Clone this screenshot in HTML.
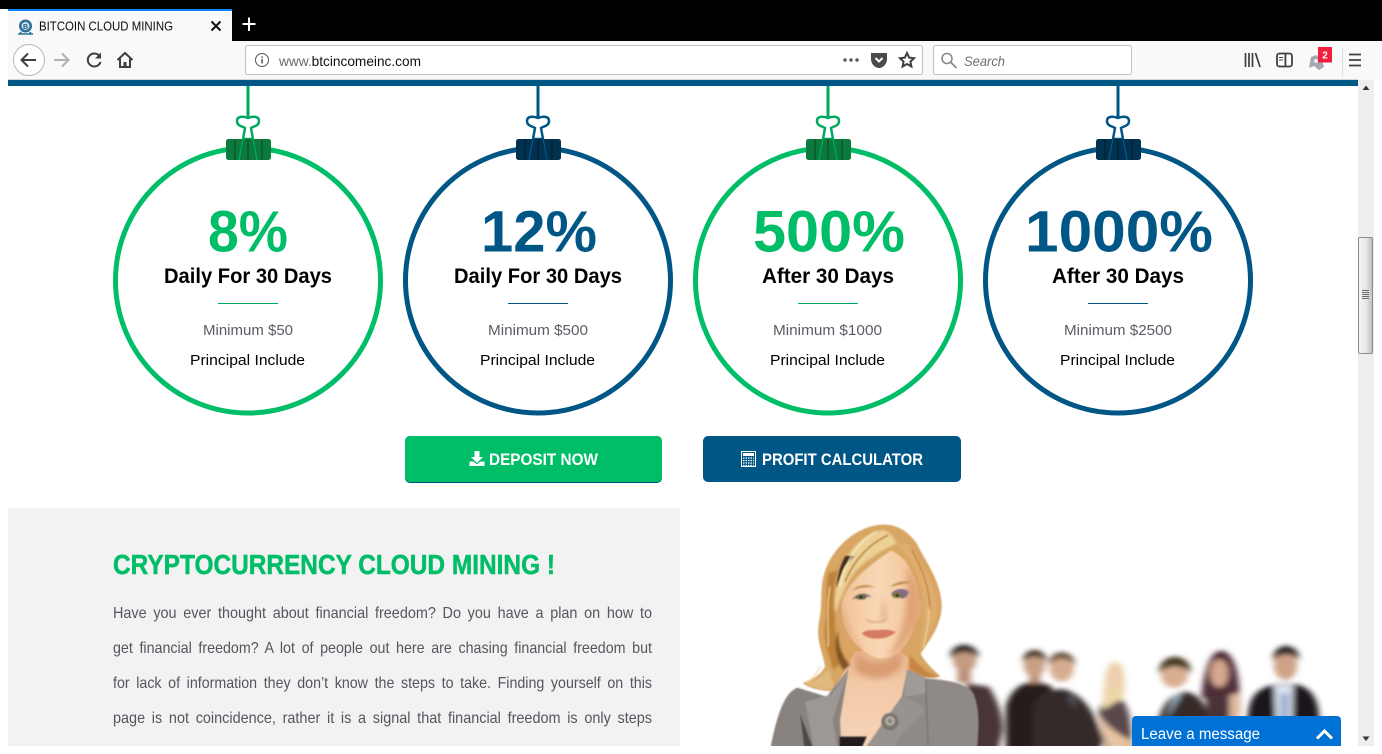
<!DOCTYPE html>
<html lang="en"><head><meta charset="utf-8"><title>BITCOIN CLOUD MINING</title>
<style>
html,body{margin:0;padding:0;background:#fff;overflow:hidden;width:1382px;height:754px}
svg{display:block;font-family:"Liberation Sans",sans-serif}
</style></head><body>
<svg width="1382" height="754" viewBox="0 0 1382 754" xmlns="http://www.w3.org/2000/svg">
<defs>
<filter id="s1" x="-20%" y="-20%" width="140%" height="140%"><feGaussianBlur stdDeviation="2"/></filter>
<filter id="s2" x="-20%" y="-20%" width="140%" height="140%"><feGaussianBlur stdDeviation="4"/></filter>
<filter id="s3" x="-30%" y="-30%" width="160%" height="160%"><feGaussianBlur stdDeviation="9"/></filter>
<filter id="p" x="-10%" y="-10%" width="120%" height="120%"><feGaussianBlur stdDeviation="7"/></filter>
<filter id="c" x="-10%" y="-10%" width="120%" height="120%"><feGaussianBlur stdDeviation=".35"/></filter>
<linearGradient id="thumb" x1="0" x2="1" y1="0" y2="0"><stop offset="0" stop-color="#f6f6f6"/><stop offset=".55" stop-color="#e6e6e6"/><stop offset="1" stop-color="#bdbdbd"/></linearGradient>
<linearGradient id="face" x1="0" x2="1" y1="0" y2="0"><stop offset="0" stop-color="#f1c298"/><stop offset=".45" stop-color="#f9d8b6"/><stop offset=".8" stop-color="#f4c9a0"/><stop offset="1" stop-color="#e0a678"/></linearGradient>
<linearGradient id="chest" x1="0" x2="0" y1="0" y2="1"><stop offset="0" stop-color="#e6b088"/><stop offset=".35" stop-color="#f3caa8"/><stop offset="1" stop-color="#f6d3b8"/></linearGradient>
<clipPath id="bot"><rect x="680" y="500" width="678" height="246"/></clipPath>
<g id="clip">
<path d="M0,0V31" stroke-width="3" fill="none"/>
<path d="M-5,53L-3,42C-6,40 -11,40 -11,35C-11,30 -5,30 0,32C5,30 11,30 11,35C11,40 6,40 3,42L5,53Z" fill="#fff" stroke-width="2.500"/>
<rect x="-22" y="53" width="45" height="21" rx="2.500" stroke="none"/>
<path d="M-13,53V74M14,53V74M0,53V74" stroke="#000" stroke-opacity=".22" stroke-width="2" fill="none"/>
<path d="M-5,52L-9,74M5,52L9,74" stroke-width="1.300" fill="none"/>
</g>
</defs>

<!-- window chrome -->
<rect width="1382" height="41" fill="#000"/>
<rect y="9" width="8" height="71" fill="#fff"/>
<rect x="8" y="41" width="1374" height="39" fill="#f9f9fa"/>
<rect x="8" y="79" width="1350" height="1" fill="#d6d6d6"/>
<rect x="8" y="9" width="224" height="32" fill="#f9f9fa"/>
<rect x="8" y="9" width="224" height="2" fill="#0a84ff"/>
<!-- favicon -->
<circle cx="25.500" cy="26" r="6.500" fill="#2a6f99"/><circle cx="25.500" cy="26" r="4" fill="#cfe0ec"/>
<text x="25.500" y="29" font-size="7" font-weight="700" fill="#1d5a80" text-anchor="middle">B</text>
<path d="M18,34H33M20,32L22,34M31,32L29,34" stroke="#2a6f99" stroke-width="1.500" fill="none"/>
<text x="39" y="30.500" font-size="12.500" fill="#0c0c0d" textLength="134" lengthAdjust="spacingAndGlyphs">BITCOIN CLOUD MINING</text>
<path d="M211.500,21.500L220.500,30.500M220.500,21.500L211.500,30.500" stroke="#111" stroke-width="2" fill="none"/>
<path d="M249,17.500V31M242.500,24H255.500" stroke="#fff" stroke-width="2" fill="none"/>

<!-- nav -->
<circle cx="29" cy="60" r="15.500" fill="#fff" stroke="#b8b8b8"/>
<path d="M36,60H22M28,53.500L21.500,60L28,66.500" stroke="#3f3f40" stroke-width="2" fill="none"/>
<path d="M54,60H68M62,53.500L68.500,60L62,66.500" stroke="#b1b1b3" stroke-width="2" fill="none"/>
<path d="M99.500,56A6.500,6.500 0 1 0 100.500,62" stroke="#3f3f40" stroke-width="2" fill="none"/>
<path d="M101,52.500V58.500H95Z" fill="#3f3f40"/>
<path d="M117.500,60L125,53L132.500,60M120,58.500V67H130V58.500" stroke="#3f3f40" stroke-width="2" fill="none"/><rect x="123.500" y="62" width="3" height="5" fill="#3f3f40"/>

<!-- url bar -->
<rect x="245.500" y="45.500" width="677" height="29" rx="2" fill="#fff" stroke="#c2c2c2"/>
<circle cx="262" cy="60" r="6.500" fill="none" stroke="#555" stroke-width="1"/>
<rect x="261.300" y="59" width="1.500" height="4.500" fill="#555"/><rect x="261.300" y="56.300" width="1.500" height="1.500" fill="#555"/>
<text x="279" y="66" font-size="14" fill="#111" textLength="142" lengthAdjust="spacingAndGlyphs"><tspan fill="#6b6b6b">www.</tspan>btcincomeinc.com</text>
<circle cx="845" cy="60" r="1.700" fill="#555"/><circle cx="851" cy="60" r="1.700" fill="#555"/><circle cx="857" cy="60" r="1.700" fill="#555"/>
<path d="M871,53H887V59C887,64 883,68 879,68C875,68 871,64 871,59Z" fill="#4a4a4f"/>
<path d="M875.500,58L879,61.500L882.500,58" stroke="#fff" stroke-width="2" fill="none"/>
<path d="M907,53L909.100,57.600L914,58.200L910.400,61.600L911.400,66.500L907,64L902.600,66.500L903.600,61.600L900,58.200L904.900,57.600Z" fill="none" stroke="#3f3f40" stroke-width="2"/>

<!-- search -->
<rect x="933.500" y="45.500" width="198" height="29" rx="2" fill="#fff" stroke="#c2c2c2"/>
<circle cx="947" cy="58.500" r="5" fill="none" stroke="#8a8a8a" stroke-width="1.600"/>
<path d="M951,62.500L956.500,68" stroke="#8a8a8a" stroke-width="1.800"/>
<text x="964" y="66" font-size="13.500" font-style="italic" fill="#6f6f6f" textLength="41" lengthAdjust="spacingAndGlyphs">Search</text>

<!-- right icons -->
<path d="M1245.500,53V67M1249,53V67M1252.500,53V67M1255.500,53L1260,67" stroke="#3f3f40" stroke-width="1.700" fill="none"/>
<rect x="1277" y="53.500" width="15" height="13" rx="2.500" fill="#fff" stroke="#3f3f40" stroke-width="1.800"/>
<rect x="1284.500" y="54" width="1.800" height="12" fill="#3f3f40"/><path d="M1279,57.500H1283M1279,60H1283" stroke="#3f3f40" stroke-width="1"/>
<path d="M1309,68L1311,57L1316,55L1322,60L1324,67L1319,70L1314,66Z" fill="#a6a8b0"/><circle cx="1316" cy="61" r="2" fill="#f0f0f0"/>
<rect x="1318" y="47" width="14" height="15.500" fill="#f01f3e"/>
<text x="1325" y="58.500" font-size="10" font-weight="700" fill="#fff" text-anchor="middle">2</text>
<rect x="1342" y="48" width="1" height="28" fill="#dcdcdc"/>
<path d="M1349,54.500H1361M1349,60H1361M1349,65.500H1361" stroke="#3f3f40" stroke-width="1.800"/>

<!-- blue bar -->
<rect x="8" y="80" width="1350" height="6" fill="#005685"/>

<!-- scrollbar -->
<rect x="1358" y="80" width="16" height="666" fill="#eeeeee"/>
<path d="M1362.500,90L1366,85.500L1369.500,90Z" fill="#333"/>
<path d="M1362.500,736.500L1366,741L1369.500,736.500Z" fill="#333"/>
<rect x="1358.500" y="237.500" width="14" height="116" rx="1.500" fill="url(#thumb)" stroke="#8c8c8c"/>
<rect x="1362" y="290" width="7" height="1" fill="#6a6a6a"/><rect x="1362" y="292" width="7" height="1" fill="#6a6a6a"/><rect x="1362" y="294" width="7" height="1" fill="#6a6a6a"/><rect x="1362" y="296" width="7" height="1" fill="#6a6a6a"/><rect x="1362" y="298" width="7" height="1" fill="#6a6a6a"/>

<!-- circles -->
<g fill="none" stroke-width="5">
<circle cx="248" cy="280.500" r="132.500" stroke="#00bd68"/>
<circle cx="538" cy="280.500" r="132.500" stroke="#005685"/>
<circle cx="828" cy="280.500" r="132.500" stroke="#00bd68"/>
<circle cx="1118" cy="280.500" r="132.500" stroke="#005685"/>
</g>
<g filter="url(#c)">
<use href="#clip" x="248" y="86" stroke="#00a860" fill="#0a7a3c"/>
<use href="#clip" x="538" y="86" stroke="#005685" fill="#04304f"/>
<use href="#clip" x="828" y="86" stroke="#00a860" fill="#0a7a3c"/>
<use href="#clip" x="1118" y="86" stroke="#005685" fill="#04304f"/>
</g>

<!-- circle text -->
<g font-weight="700" font-size="58">
<text x="208" y="251.500" fill="#00bd68" textLength="80" lengthAdjust="spacingAndGlyphs">8%</text>
<text x="481" y="251.500" fill="#005685" textLength="116" lengthAdjust="spacingAndGlyphs">12%</text>
<text x="753" y="251.500" fill="#00bd68" textLength="152" lengthAdjust="spacingAndGlyphs">500%</text>
<text x="1025" y="251.500" fill="#005685" textLength="188" lengthAdjust="spacingAndGlyphs">1000%</text>
</g>
<g font-weight="700" font-size="21" fill="#000">
<text x="164" y="283" textLength="168" lengthAdjust="spacingAndGlyphs">Daily For 30 Days</text>
<text x="454" y="283" textLength="168" lengthAdjust="spacingAndGlyphs">Daily For 30 Days</text>
<text x="762" y="283" textLength="132" lengthAdjust="spacingAndGlyphs">After 30 Days</text>
<text x="1052" y="283" textLength="132" lengthAdjust="spacingAndGlyphs">After 30 Days</text>
</g>
<rect x="218" y="303" width="60" height="1" fill="#00a860"/>
<rect x="508" y="303" width="60" height="1" fill="#005685"/>
<rect x="798" y="303" width="60" height="1" fill="#00a860"/>
<rect x="1088" y="303" width="60" height="1" fill="#005685"/>
<g font-size="15" fill="#5c5c66">
<text x="203" y="335" textLength="90" lengthAdjust="spacingAndGlyphs">Minimum $50</text>
<text x="488" y="335" textLength="100" lengthAdjust="spacingAndGlyphs">Minimum $500</text>
<text x="773" y="335" textLength="109" lengthAdjust="spacingAndGlyphs">Minimum $1000</text>
<text x="1064" y="335" textLength="108" lengthAdjust="spacingAndGlyphs">Minimum $2500</text>
</g>
<g font-size="15" fill="#000">
<text x="190" y="365" textLength="115" lengthAdjust="spacingAndGlyphs">Principal Include</text>
<text x="480" y="365" textLength="115" lengthAdjust="spacingAndGlyphs">Principal Include</text>
<text x="770" y="365" textLength="115" lengthAdjust="spacingAndGlyphs">Principal Include</text>
<text x="1060" y="365" textLength="115" lengthAdjust="spacingAndGlyphs">Principal Include</text>
</g>

<!-- buttons -->
<rect x="405" y="436" width="257" height="47" rx="5" fill="#005685"/>
<rect x="405" y="436" width="257" height="46" rx="5" fill="#00bd68"/>
<path d="M474.500,451H479.500V457H483L477,463L471,457H474.500Z" fill="#fff"/>
<path d="M469.500,461.500H473.500L477,464.500L480.500,461.500H484.500V466H469.500Z" fill="#fff"/>
<text x="489" y="465" font-size="16.500" font-weight="700" fill="#fff" textLength="109" lengthAdjust="spacingAndGlyphs">DEPOSIT NOW</text>
<rect x="703" y="436" width="258" height="46" rx="5" fill="#005685"/>
<rect x="741.500" y="451.500" width="14" height="15" fill="none" stroke="#fff"/>
<rect x="743" y="453" width="11" height="3" fill="#fff"/>
<path d="M743,458H754M743,460.500H754M743,463H754M743,465.500H754" stroke="#fff" stroke-width="1.200" stroke-dasharray="1.500 1"/>
<text x="762" y="465" font-size="16.500" font-weight="700" fill="#fff" textLength="161" lengthAdjust="spacingAndGlyphs">PROFIT CALCULATOR</text>

<!-- left panel -->
<rect x="8" y="508" width="672" height="238" fill="#f2f2f2"/>
<text x="113" y="574" font-size="27.500" font-weight="700" fill="#00bd68" stroke="#00bd68" stroke-width=".5" textLength="442" lengthAdjust="spacingAndGlyphs">CRYPTOCURRENCY CLOUD MINING !</text>
<g font-size="16" fill="#55555f" word-spacing="3">
<text x="113" y="618" textLength="539" lengthAdjust="spacingAndGlyphs">Have you ever thought about financial freedom? Do you have a plan on how to</text>
<text x="113" y="653" textLength="539" lengthAdjust="spacingAndGlyphs">get financial freedom? A lot of people out here are chasing financial freedom but</text>
<text x="113" y="688" textLength="539" lengthAdjust="spacingAndGlyphs">for lack of information they don’t know the steps to take. Finding yourself on this</text>
<text x="113" y="723" textLength="539" lengthAdjust="spacingAndGlyphs">page is not coincidence, rather it is a signal that financial freedom is only steps</text>
</g>

<!-- photo: background people -->
<g clip-path="url(#bot)">
<g transform="translate(680 510) scale(.4475 .3333)" filter="url(#p)">
<path d="M640,520L690,530C715,580 725,640 720,670L700,780H655Z" fill="#4a3634"/>
<ellipse cx="636" cy="450" rx="26" ry="36" fill="#c49a80"/><path d="M604,445C600,390 668,390 668,445C650,420 622,420 604,445Z" fill="#2f2c2a"/>
<rect x="620" y="480" width="30" height="40" fill="#b99078"/>
<path d="M728,780L728,590C740,530 770,515 800,515L832,530L800,780Z" fill="#251e1e"/>
<ellipse cx="792" cy="465" rx="24" ry="36" fill="#c9a084"/><path d="M766,455C766,408 818,408 820,455C800,435 785,435 766,455Z" fill="#4a3628"/>
<rect x="780" y="495" width="25" height="25" fill="#bb9078"/>
<path d="M790,780L790,590C800,550 830,535 860,538C910,560 930,620 945,690L925,780Z" fill="#352c2c"/>
<ellipse cx="853" cy="475" rx="27" ry="40" fill="#d6ad90"/><path d="M824,465C824,413 882,413 883,465C860,440 845,440 824,465Z" fill="#6a5440"/>
<path d="M868,560L885,600L878,555Z" fill="#606870"/>
<path d="M935,610C940,570 960,555 985,565C1005,590 1012,640 1010,780H960C945,670 935,640 935,610Z" fill="#5a4a4c"/>
<path d="M945,600C945,530 950,455 972,455C995,455 998,520 990,570C975,570 960,590 945,600Z" fill="#ecd7a8"/>
<ellipse cx="972" cy="500" rx="20" ry="36" fill="#eecfb0"/>
<path d="M935,610C945,640 975,670 1005,690L1010,780H975C950,680 935,650 935,610Z" fill="#e8c4a4"/>
<path d="M1065,650C1075,580 1100,550 1130,545C1165,555 1180,590 1185,650Z" fill="#352a26"/>
<path d="M1085,630L1125,545L1105,560Z" fill="#a5b8c8"/>
<ellipse cx="1105" cy="495" rx="30" ry="38" fill="#d9ae90"/><path d="M1070,490C1070,423 1142,423 1142,490C1120,465 1095,460 1070,490Z" fill="#4a3a22"/>
<path d="M1165,560C1170,480 1185,422 1210,422C1240,425 1250,500 1250,550L1180,570Z" fill="#4f2f38"/>
<ellipse cx="1205" cy="490" rx="20" ry="42" fill="#d8a890"/>
<path d="M1175,560L1245,550C1255,580 1250,610 1245,650H1180Z" fill="#4a3038"/>
<path d="M1228,555L1252,550C1256,580 1252,610 1248,650H1228Z" fill="#e0b8a0"/>
<path d="M1268,650C1268,570 1280,535 1335,522L1375,522C1415,535 1430,570 1428,650Z" fill="#1c181a"/>
<path d="M1328,525L1370,525L1368,650H1332Z" fill="#dbe4ee"/>
<path d="M1342,550H1360L1358,650H1342Z" fill="#94a8d0"/>
<ellipse cx="1353" cy="465" rx="26" ry="45" fill="#cfa288"/><path d="M1325,450C1325,393 1384,393 1384,450C1362,425 1345,430 1325,450Z" fill="#2a2628"/>
</g>
<!-- woman -->
<g transform="translate(760 520) scale(.33333)">
<path filter="url(#s1)" d="M370,14C300,15 230,70 200,140C175,200 190,240 178,300C165,360 190,400 195,440C180,470 150,480 128,490C160,510 200,515 235,512L270,440L450,440C480,470 510,478 542,470C510,440 490,420 482,400C510,360 548,310 545,250C540,180 500,130 470,70C440,30 410,14 370,14Z" fill="#d8a564"/>
<path d="M285,395L255,450L190,560L200,700L360,700L480,540L460,430L415,385Z" fill="url(#chest)"/>
<path filter="url(#s3)" d="M290,400C330,440 390,430 420,395L425,440C380,490 320,480 285,450Z" fill="#d4946a" opacity=".8"/>
<path filter="url(#s1)" d="M245,255C255,190 330,135 392,92C442,110 472,170 478,240C492,238 490,282 470,302C450,372 412,415 360,416C310,405 266,360 250,305Z" fill="url(#face)"/>
<path filter="url(#s3)" d="M440,130C470,180 478,240 470,300C450,360 420,400 380,412C420,360 445,300 440,130Z" fill="#d8986a" opacity=".7"/>
<path filter="url(#s3)" d="M250,250C255,300 275,360 320,400C290,390 255,340 245,290Z" fill="#dc9f72" opacity=".7"/>
<g filter="url(#s2)">
<path d="M370,30C310,40 260,90 235,170C225,210 222,250 222,285C240,250 250,200 290,150C330,110 370,90 410,70C400,50 390,35 370,30Z" fill="#ecd096"/>
<path d="M205,160C195,220 205,260 195,320C190,370 210,410 220,450L250,420C230,380 222,330 225,280C220,240 220,200 235,150Z" fill="#bd8239"/>
<path d="M410,75C450,105 480,170 490,240C500,290 490,330 480,385C510,340 535,300 530,250C525,190 480,120 440,70Z" fill="#dfae6e"/>
<path d="M450,405C480,440 500,460 535,468C500,480 470,470 445,445Z" fill="#c6853f"/>
<path d="M135,490C170,480 190,465 205,445L225,505C195,512 160,505 135,490Z" fill="#e0ba80"/>
<path d="M235,330C232,370 245,410 270,435L250,450C225,410 220,370 235,330Z" fill="#7f5226"/>
</g>
<path filter="url(#s1)" d="M256,108C240,135 232,170 228,205L248,150C258,130 270,120 282,108Z" fill="#43321f"/>
<g fill="none" stroke-width="4" filter="url(#s1)">
<path d="M350,35C300,60 255,120 240,200" stroke="#fbeec8"/>
<path d="M385,45C330,70 285,115 255,185" stroke="#b07c3a"/>
<path d="M210,200C200,260 205,320 205,380" stroke="#efcd94"/>
<path d="M455,90C490,150 510,210 510,270" stroke="#bf8745"/>
<path d="M505,260C510,310 495,350 490,385" stroke="#f0cf97"/>
<path d="M180,440C170,465 155,478 140,488" stroke="#f2d8a8"/>
</g>
<g filter="url(#s1)">
<path d="M28,700C48,600 68,520 112,503L200,530L265,448L240,600L245,700Z" fill="#89837f"/>
<path d="M305,700L425,530L442,448L500,475C560,480 620,488 640,520C662,570 656,630 650,700Z" fill="#8f8a86"/>
<path d="M135,545L215,523L264,452L218,600L236,700H165Z" fill="#9d9894"/>
<path d="M305,700L425,530L465,545L497,568L425,640L395,700Z" fill="#98938f"/>
<path d="M440,450L500,478L498,520L465,525L432,530Z" fill="#a09b97"/>
<path d="M238,650L320,650L298,700H238Z" fill="#231c1c"/>
<path d="M497,480L505,700" stroke="#6e6a68" stroke-width="3" fill="none"/>
<path d="M120,580L165,700L135,700Z" fill="#4e4a48"/>
</g>
<g filter="url(#s1)"><circle cx="390" cy="605" r="26" fill="#7a766e"/><circle cx="390" cy="603" r="14" fill="#b9b5ab"/><circle cx="390" cy="603" r="8" fill="#8a867e"/></g>
<g filter="url(#s1)">
<path d="M275,212C295,192 325,192 345,202C320,200 295,204 275,212Z" fill="#c08d54"/>
<path d="M390,200C410,185 435,180 450,188C430,192 410,196 390,200Z" fill="#c08d54"/>
<path d="M276,240C290,218 320,214 335,233C315,226 295,230 276,240Z" fill="#8f7078"/>
<path d="M392,222C405,206 430,202 445,214C445,228 436,234 426,236C416,225 406,220 392,222Z" fill="#86688a"/>
<ellipse cx="303" cy="231" rx="17" ry="8" fill="#6a6a44"/>
<ellipse cx="412" cy="226" rx="17" ry="8" fill="#78783f"/>
<circle cx="303" cy="231" r="4.500" fill="#1f1d12"/><circle cx="412" cy="226" r="4.500" fill="#1f1d12"/>
<path d="M305,340C325,325 345,332 355,330C370,328 390,328 408,336C390,352 370,356 350,356C330,356 315,350 305,340Z" fill="#d67a64"/>
</g>
<path filter="url(#s2)" d="M320,298C335,312 370,310 380,296" stroke="#d69f76" stroke-width="5" fill="none"/>
<path filter="url(#s3)" d="M368,235C376,260 385,282 378,298L358,300C368,285 362,255 368,235Z" fill="#e0ac82" opacity=".8"/>
</g>
</g>

<!-- chat -->
<path d="M1132,746V720A4,4 0 0 1 1136,716H1337A4,4 0 0 1 1341,720V746Z" fill="#0072d6"/>
<text x="1141" y="739" font-size="15.500" fill="#fff" textLength="119" lengthAdjust="spacingAndGlyphs">Leave a message</text>
<path d="M1317,738.500L1324.500,731L1332,738.500" stroke="#fff" stroke-width="3" fill="none"/>
</svg>
</body></html>
